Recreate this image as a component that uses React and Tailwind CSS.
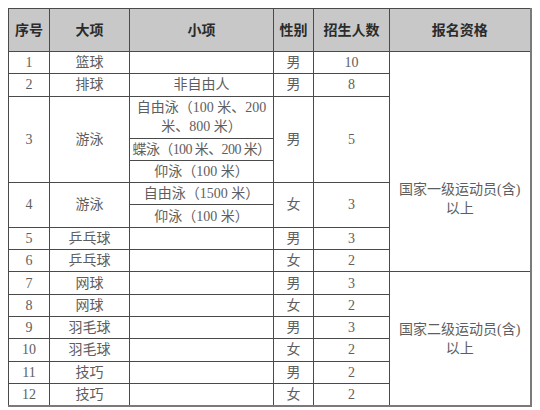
import React from "react";

const font = { fontFamily: '"Liberation Serif", "Noto Sans CJK SC", serif' };

const td = "border border-[#4a4a4a] p-0 text-center align-middle";
const th = "border border-[#4a4a4a] p-0 text-center align-middle font-bold text-[#2b2b2b]";

const lowerRows = [
	["5", "乒乓球", "男", "3"],
	["6", "乒乓球", "女", "2"],
];

const groupTwo = [
	["7", "网球", "男", "3"],
	["8", "网球", "女", "2"],
	["9", "羽毛球", "男", "3"],
	["10", "羽毛球", "女", "2"],
	["11", "技巧", "男", "2"],
	["12", "技巧", "女", "2"],
];

const App = () => {
	return (
		<div className="w-[540px] h-[410px] bg-white pl-2 pt-2" style={font}>
			<table className="table-fixed border-collapse w-[522px] text-[14px] text-[#5e5e5e] border-r-2 border-b-2 border-[#7a7a7a]">
				<colgroup>
					<col className="w-[41px]" />
					<col className="w-[80px]" />
					<col className="w-[144px]" />
					<col className="w-[40px]" />
					<col className="w-[76px]" />
					<col className="w-[141px]" />
				</colgroup>
				<thead>
					<tr className="h-[43px] bg-[#c8c8c8]">
						<th className={th}>序号</th>
						<th className={th}>大项</th>
						<th className={th}>小项</th>
						<th className={th}>性别</th>
						<th className={th}>招生人数</th>
						<th className={th}>报名资格</th>
					</tr>
				</thead>
				<tbody>
					<tr className="h-[22.3px]">
						<td className={td}>1</td>
						<td className={td}>篮球</td>
						<td className={td}></td>
						<td className={td}>男</td>
						<td className={td}>10</td>
						<td className={td + " leading-[19px] pt-[74px]"} rowSpan={9}>
							国家一级运动员(含)
							<br />
							以上
						</td>
					</tr>
					<tr className="h-[22.3px]">
						<td className={td}>2</td>
						<td className={td}>排球</td>
						<td className={td}>非自由人</td>
						<td className={td}>男</td>
						<td className={td}>8</td>
					</tr>
					{/* 游泳 - 男 */}
					<tr className="h-[42px]">
						<td className={td} rowSpan={3}>3</td>
						<td className={td} rowSpan={3}>游泳</td>
						<td className={td + " leading-[19px]"}>
							自由泳（100 米、200
							<br />
							米、800 米）
						</td>
						<td className={td} rowSpan={3}>男</td>
						<td className={td} rowSpan={3}>5</td>
					</tr>
					<tr className="h-[22.3px]">
						<td className={td + " whitespace-nowrap tracking-[-0.6px]"}>蝶泳（100 米、200 米）</td>
					</tr>
					<tr className="h-[22.3px]">
						<td className={td}>仰泳（100 米）</td>
					</tr>
					{/* 游泳 - 女 */}
					<tr className="h-[22.3px]">
						<td className={td} rowSpan={2}>4</td>
						<td className={td} rowSpan={2}>游泳</td>
						<td className={td}>自由泳（1500 米）</td>
						<td className={td} rowSpan={2}>女</td>
						<td className={td} rowSpan={2}>3</td>
					</tr>
					<tr className="h-[22.3px]">
						<td className={td}>仰泳（100 米）</td>
					</tr>
					{lowerRows.map((r) => (
						<tr key={r[0]} className="h-[22.3px]">
							<td className={td}>{r[0]}</td>
							<td className={td}>{r[1]}</td>
							<td className={td}></td>
							<td className={td}>{r[2]}</td>
							<td className={td}>{r[3]}</td>
						</tr>
					))}
					{groupTwo.map((r, i) => (
						<tr key={r[0]} className="h-[22.3px]">
							<td className={td}>{r[0]}</td>
							<td className={td}>{r[1]}</td>
							<td className={td}></td>
							<td className={td}>{r[2]}</td>
							<td className={td}>{r[3]}</td>
							{i === 0 && (
								<td className={td + " leading-[19px]"} rowSpan={6}>
									国家二级运动员(含)
									<br />
									以上
								</td>
							)}
						</tr>
					))}
				</tbody>
			</table>
		</div>
	);
};

export default App;
